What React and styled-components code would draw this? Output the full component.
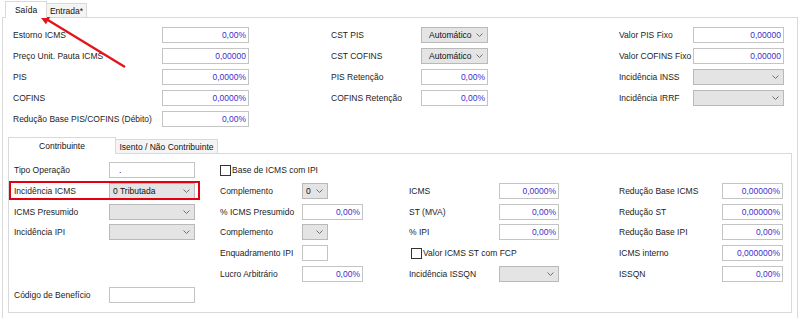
import React from "react";
import styled, { createGlobalStyle, css } from "styled-components";

const GlobalStyle = createGlobalStyle`
  html, body { margin: 0; padding: 0; background: #fff; }
  body {
    font-family: "Liberation Sans", Arial, sans-serif;
    font-size: 8.5px;
    color: #1c1c1c;
  }
`;

const topColumns = [
  {
    width: 318,
    label: 149,
    rows: [
      { label: "Estorno ICMS", kind: "num", w: 87, value: "0,00%" },
      { label: "Preço Unit. Pauta ICMS", kind: "num", w: 87, value: "0,00000" },
      { label: "PIS", kind: "num", w: 87, value: "0,0000%" },
      { label: "COFINS", kind: "num", w: 87, value: "0,0000%" },
      { label: "Redução Base PIS/COFINS (Débito)", kind: "num", w: 87, value: "0,00%" },
    ],
  },
  {
    width: 288,
    label: 90,
    rows: [
      { label: "CST PIS", kind: "combo", w: 67, value: "Automático", pad: 7 },
      { label: "CST COFINS", kind: "combo", w: 67, value: "Automático", pad: 7 },
      { label: "PIS Retenção", kind: "num", w: 67, value: "0,00%" },
      { label: "COFINS Retenção", kind: "num", w: 67, value: "0,00%" },
    ],
  },
  {
    width: 180,
    label: 74,
    rows: [
      { label: "Valor PIS Fixo", kind: "num", w: 91, value: "0,00000" },
      { label: "Valor COFINS Fixo", kind: "num", w: 91, value: "0,00000" },
      { label: "Incidência INSS", kind: "combo", w: 91 },
      { label: "Incidência IRRF", kind: "combo", w: 91 },
    ],
  },
];

const innerColumns = [
  {
    width: 206,
    label: 95,
    rows: [
      { label: "Tipo Operação", kind: "text", w: 86, value: "." },
      { label: "Incidência ICMS", kind: "combo", w: 86, value: "0 Tributada", highlight: true },
      { label: "ICMS Presumido", kind: "combo", w: 86 },
      { label: "Incidência IPI", kind: "combo", w: 86 },
      { kind: "empty" },
      { kind: "empty" },
      { label: "Código de Benefício", kind: "text", w: 86 },
    ],
  },
  {
    width: 189,
    label: 82,
    rows: [
      { label: "Base de ICMS com IPI", kind: "check" },
      { label: "Complemento", kind: "combo", w: 26, value: "0" },
      { label: "% ICMS Presumido", kind: "num", w: 61, value: "0,00%" },
      { label: "Complemento", kind: "combo", w: 26 },
      { label: "Enquadramento IPI", kind: "text", w: 26 },
      { label: "Lucro Arbitrário", kind: "num", w: 61, value: "0,00%" },
    ],
  },
  {
    width: 210,
    label: 90,
    rows: [
      { kind: "empty" },
      { label: "ICMS", kind: "num", w: 60, value: "0,0000%" },
      { label: "ST (MVA)", kind: "num", w: 60, value: "0,00%" },
      { label: "% IPI", kind: "num", w: 60, value: "0,00%" },
      { label: "Valor ICMS ST com FCP", kind: "check", indent: 2 },
      { label: "Incidência ISSQN", kind: "combo", w: 60 },
    ],
  },
  {
    width: 170,
    label: 103,
    rows: [
      { kind: "empty" },
      { label: "Redução Base ICMS", kind: "num", w: 61, value: "0,00000%" },
      { label: "Redução ST", kind: "num", w: 61, value: "0,00000%" },
      { label: "Redução Base IPI", kind: "num", w: 61, value: "0,00%" },
      { label: "ICMS interno", kind: "num", w: 61, value: "0,000000%" },
      { label: "ISSQN", kind: "num", w: 61, value: "0,00%" },
    ],
  },
];

const Field = ({ row, labelWidth }) => {
  if (row.kind === "empty") return <Spacer />;
  if (row.kind === "check") {
    return (
      <CheckRow $indent={row.indent || 0}>
        <CheckBox />
        {row.label}
      </CheckRow>
    );
  }
  return (
    <Row $label={labelWidth} $highlight={row.highlight}>
      <Label>{row.label}</Label>
      {row.kind === "combo" ? (
        <Combo $w={row.w} $pad={row.pad || 3}>
          <span>{row.value || ""}</span>
          <svg width="7" height="4" viewBox="0 0 7 4">
            <polyline
              points="0.5,0.5 3.5,3.5 6.5,0.5"
              fill="none"
              stroke="#707070"
              strokeWidth="1"
            />
          </svg>
        </Combo>
      ) : row.kind === "num" ? (
        <NumberBox $w={row.w}>{row.value}</NumberBox>
      ) : (
        <TextBox $w={row.w}>{row.value || ""}</TextBox>
      )}
    </Row>
  );
};

const App = () => {
  return (
    <Page>
      <GlobalStyle />
      <TabStrip $indent={3} $h={16}>
        <Tab $active $w={42} $h={16}>
          Saída
        </Tab>
        <Tab $w={41} $h={16}>
          Entrada*
        </Tab>
      </TabStrip>
      <Frame>
        <TopSection>
          {topColumns.map((col, i) => (
            <Column key={i} $w={col.width} $gap={5}>
              {col.rows.map((row, j) => (
                <Field key={j} row={row} labelWidth={col.label} />
              ))}
            </Column>
          ))}
        </TopSection>
        <InnerTabs>
          <TabStrip $indent={0} $h={16}>
            <Tab $active $w={108} $h={16}>
              Contribuinte
            </Tab>
            <Tab $w={103} $h={16}>
              Isento / Não Contribuinte
            </Tab>
          </TabStrip>
          <Panel>
            {innerColumns.map((col, i) => (
              <Column key={i} $w={col.width} $gap={4.8}>
                {col.rows.map((row, j) => (
                  <Field key={j} row={row} labelWidth={col.label} />
                ))}
              </Column>
            ))}
          </Panel>
        </InnerTabs>
      </Frame>
      <Arrow width="800" height="318" viewBox="0 0 800 318">
        <line x1="125" y1="67" x2="47" y2="19.5" stroke="#e5141b" strokeWidth="2.4" />
        <polygon points="38,14 50.7,16.2 45.9,24.2" fill="#e5141b" />
      </Arrow>
    </Page>
  );
};

export default App;

const Page = styled.div`
  position: relative;
  width: 800px;
  height: 318px;
  overflow: hidden;
  box-sizing: border-box;
  padding: 1px 2px 0;
`;

const TabStrip = styled.div`
  display: flex;
  align-items: flex-end;
  height: ${(p) => p.$h}px;
  padding-left: ${(p) => p.$indent}px;
`;

const Tab = styled.div`
  position: relative;
  z-index: 1;
  box-sizing: border-box;
  width: ${(p) => p.$w}px;
  height: ${(p) => (p.$active ? p.$h + 1 : p.$h - 2)}px;
  margin-bottom: ${(p) => (p.$active ? -1 : 0)}px;
  margin-left: -1px;
  border: 1px solid #d9d9d9;
  border-bottom: none;
  background: ${(p) => (p.$active ? "#fff" : "#f4f4f4")};
  display: flex;
  align-items: center;
  justify-content: center;
  white-space: nowrap;
  color: #111;
  &:first-child {
    margin-left: 0;
  }
`;

const Frame = styled.div`
  box-sizing: border-box;
  height: 330px;
  border: 1px solid #d9d9d9;
  background: #fff;
  padding: 9px 5px 0;
`;

const TopSection = styled.div`
  display: flex;
  padding-left: 5px;
`;

const Column = styled.div`
  display: flex;
  flex-direction: column;
  align-items: flex-start;
  gap: ${(p) => p.$gap}px;
  width: ${(p) => p.$w}px;
  flex-shrink: 0;
`;

const Row = styled.div`
  position: relative;
  display: grid;
  grid-template-columns: ${(p) => p.$label}px auto;
  align-items: center;
  height: 16px;
  ${(p) =>
    p.$highlight &&
    css`
      &::after {
        content: "";
        position: absolute;
        top: -2px;
        bottom: -1px;
        left: -5px;
        right: -5px;
        border: 2px solid #e3000f;
        pointer-events: none;
      }
    `}
`;

const Spacer = styled.div`
  height: 16px;
`;

const Label = styled.span`
  white-space: nowrap;
  color: #1c1c1c;
`;

const boxBase = css`
  box-sizing: border-box;
  width: ${(p) => p.$w}px;
  height: 16px;
  line-height: 14px;
  white-space: nowrap;
  overflow: hidden;
`;

const NumberBox = styled.div`
  ${boxBase};
  border: 1px solid #c4c4c4;
  background: #fff;
  color: #3d2fcc;
  text-align: right;
  padding-right: 2px;
`;

const TextBox = styled.div`
  ${boxBase};
  border: 1px solid #c4c4c4;
  background: #fff;
  color: #111;
  padding-left: 9px;
`;

const Combo = styled.div`
  ${boxBase};
  display: flex;
  align-items: center;
  justify-content: space-between;
  border: 1px solid #b9b9b9;
  background: #e4e4e4;
  color: #111;
  padding: 0 4px 0 ${(p) => p.$pad}px;
`;

const CheckRow = styled.label`
  display: flex;
  align-items: center;
  height: 16px;
  white-space: nowrap;
  padding-left: ${(p) => p.$indent}px;
  color: #1c1c1c;
`;

const CheckBox = styled.span`
  box-sizing: border-box;
  width: 11px;
  height: 11px;
  border: 1px solid #333;
  background: #fff;
  margin-right: 1px;
`;

const InnerTabs = styled.div`
  margin-top: 10px;
`;

const Panel = styled.div`
  box-sizing: border-box;
  display: flex;
  height: 160px;
  border: 1px solid #d9d9d9;
  padding: 8px 0 0 5px;
  background: #fff;
`;

const Arrow = styled.svg`
  position: absolute;
  left: 0;
  top: 0;
  pointer-events: none;
`;
